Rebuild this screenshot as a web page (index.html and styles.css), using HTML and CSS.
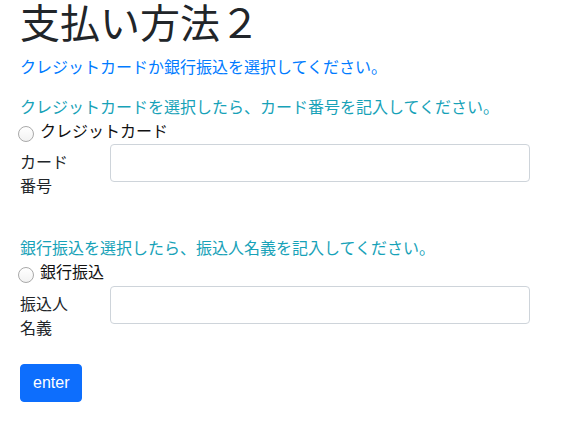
FILE: index.html
```html
<!DOCTYPE html>
<html lang="ja">
<head>
<meta charset="utf-8">
<title>支払い方法２</title>
<link rel="stylesheet" href="styles.css">
</head>
<body>
<main class="page">
  <h1 class="title">支払い方法２</h1>
  <p class="lead-text">クレジットカードか銀行振込を選択してください。</p>

  <p class="hint">クレジットカードを選択したら、カード番号を記入してください。</p>
  <label class="radio-line"><input type="radio" name="pay" class="radio">クレジットカード</label>
  <div class="form-row">
    <label class="col-label" for="card">カード番号</label>
    <input type="text" id="card" class="form-control">
  </div>

  <p class="hint hint-second">銀行振込を選択したら、振込人名義を記入してください。</p>
  <label class="radio-line"><input type="radio" name="pay" class="radio">銀行振込</label>
  <div class="form-row form-row-second">
    <label class="col-label" for="holder">振込人名義</label>
    <input type="text" id="holder" class="form-control">
  </div>

  <button type="button" class="btn">enter</button>
</main>
</body>
</html>
```

FILE: styles.css
```css
html, body {
  margin: 0;
  padding: 0;
  background: #ffffff;
}

body {
  font-family: "Liberation Sans", "Noto Sans CJK JP", sans-serif;
  font-size: 16px;
  line-height: 1.5;
  color: #212529;
}

.page {
  padding: 0 32px 0 20px;
}

.title {
  margin: 0 0 8px 0;
  font-size: 40px;
  font-weight: 400;
  line-height: 1.2;
  color: #212529;
}

.lead-text {
  margin: 0 0 16px 0;
  color: #007bff;
}

.hint {
  margin: 0;
  color: #17a2b8;
}

.hint-second {
  margin-top: 31px;
}

.radio-line {
  display: flex;
  align-items: center;
  height: 24px;
  color: #111;
}

.radio {
  appearance: none;
  -webkit-appearance: none;
  box-sizing: border-box;
  width: 16px;
  height: 16px;
  margin: 3px 6px 0 -2px;
  border: 1px solid #a9a9a9;
  border-radius: 50%;
  background: linear-gradient(#ffffff, #f2f2f2);
  flex: none;
}

.form-row {
  display: grid;
  grid-template-columns: 60px 1fr;
  column-gap: 30px;
  align-items: start;
  margin-bottom: 16px;
}

.form-row-second {
  margin-top: 1px;
}

.col-label {
  padding: 7px 0;
  line-height: 1.5;
}

.form-control {
  box-sizing: border-box;
  width: 100%;
  height: 38px;
  padding: 6px 12px;
  font: inherit;
  color: #495057;
  background: #fff;
  border: 1px solid #ced4da;
  border-radius: 4px;
  outline: none;
}

.btn {
  display: inline-block;
  box-sizing: border-box;
  height: 38px;
  padding: 6px 12px;
  font-family: "Liberation Sans", sans-serif;
  font-size: 16px;
  line-height: 1.5;
  color: #fff;
  background: #0d6efd;
  border: 1px solid #0d6efd;
  border-radius: 4px;
  cursor: pointer;
}
```
